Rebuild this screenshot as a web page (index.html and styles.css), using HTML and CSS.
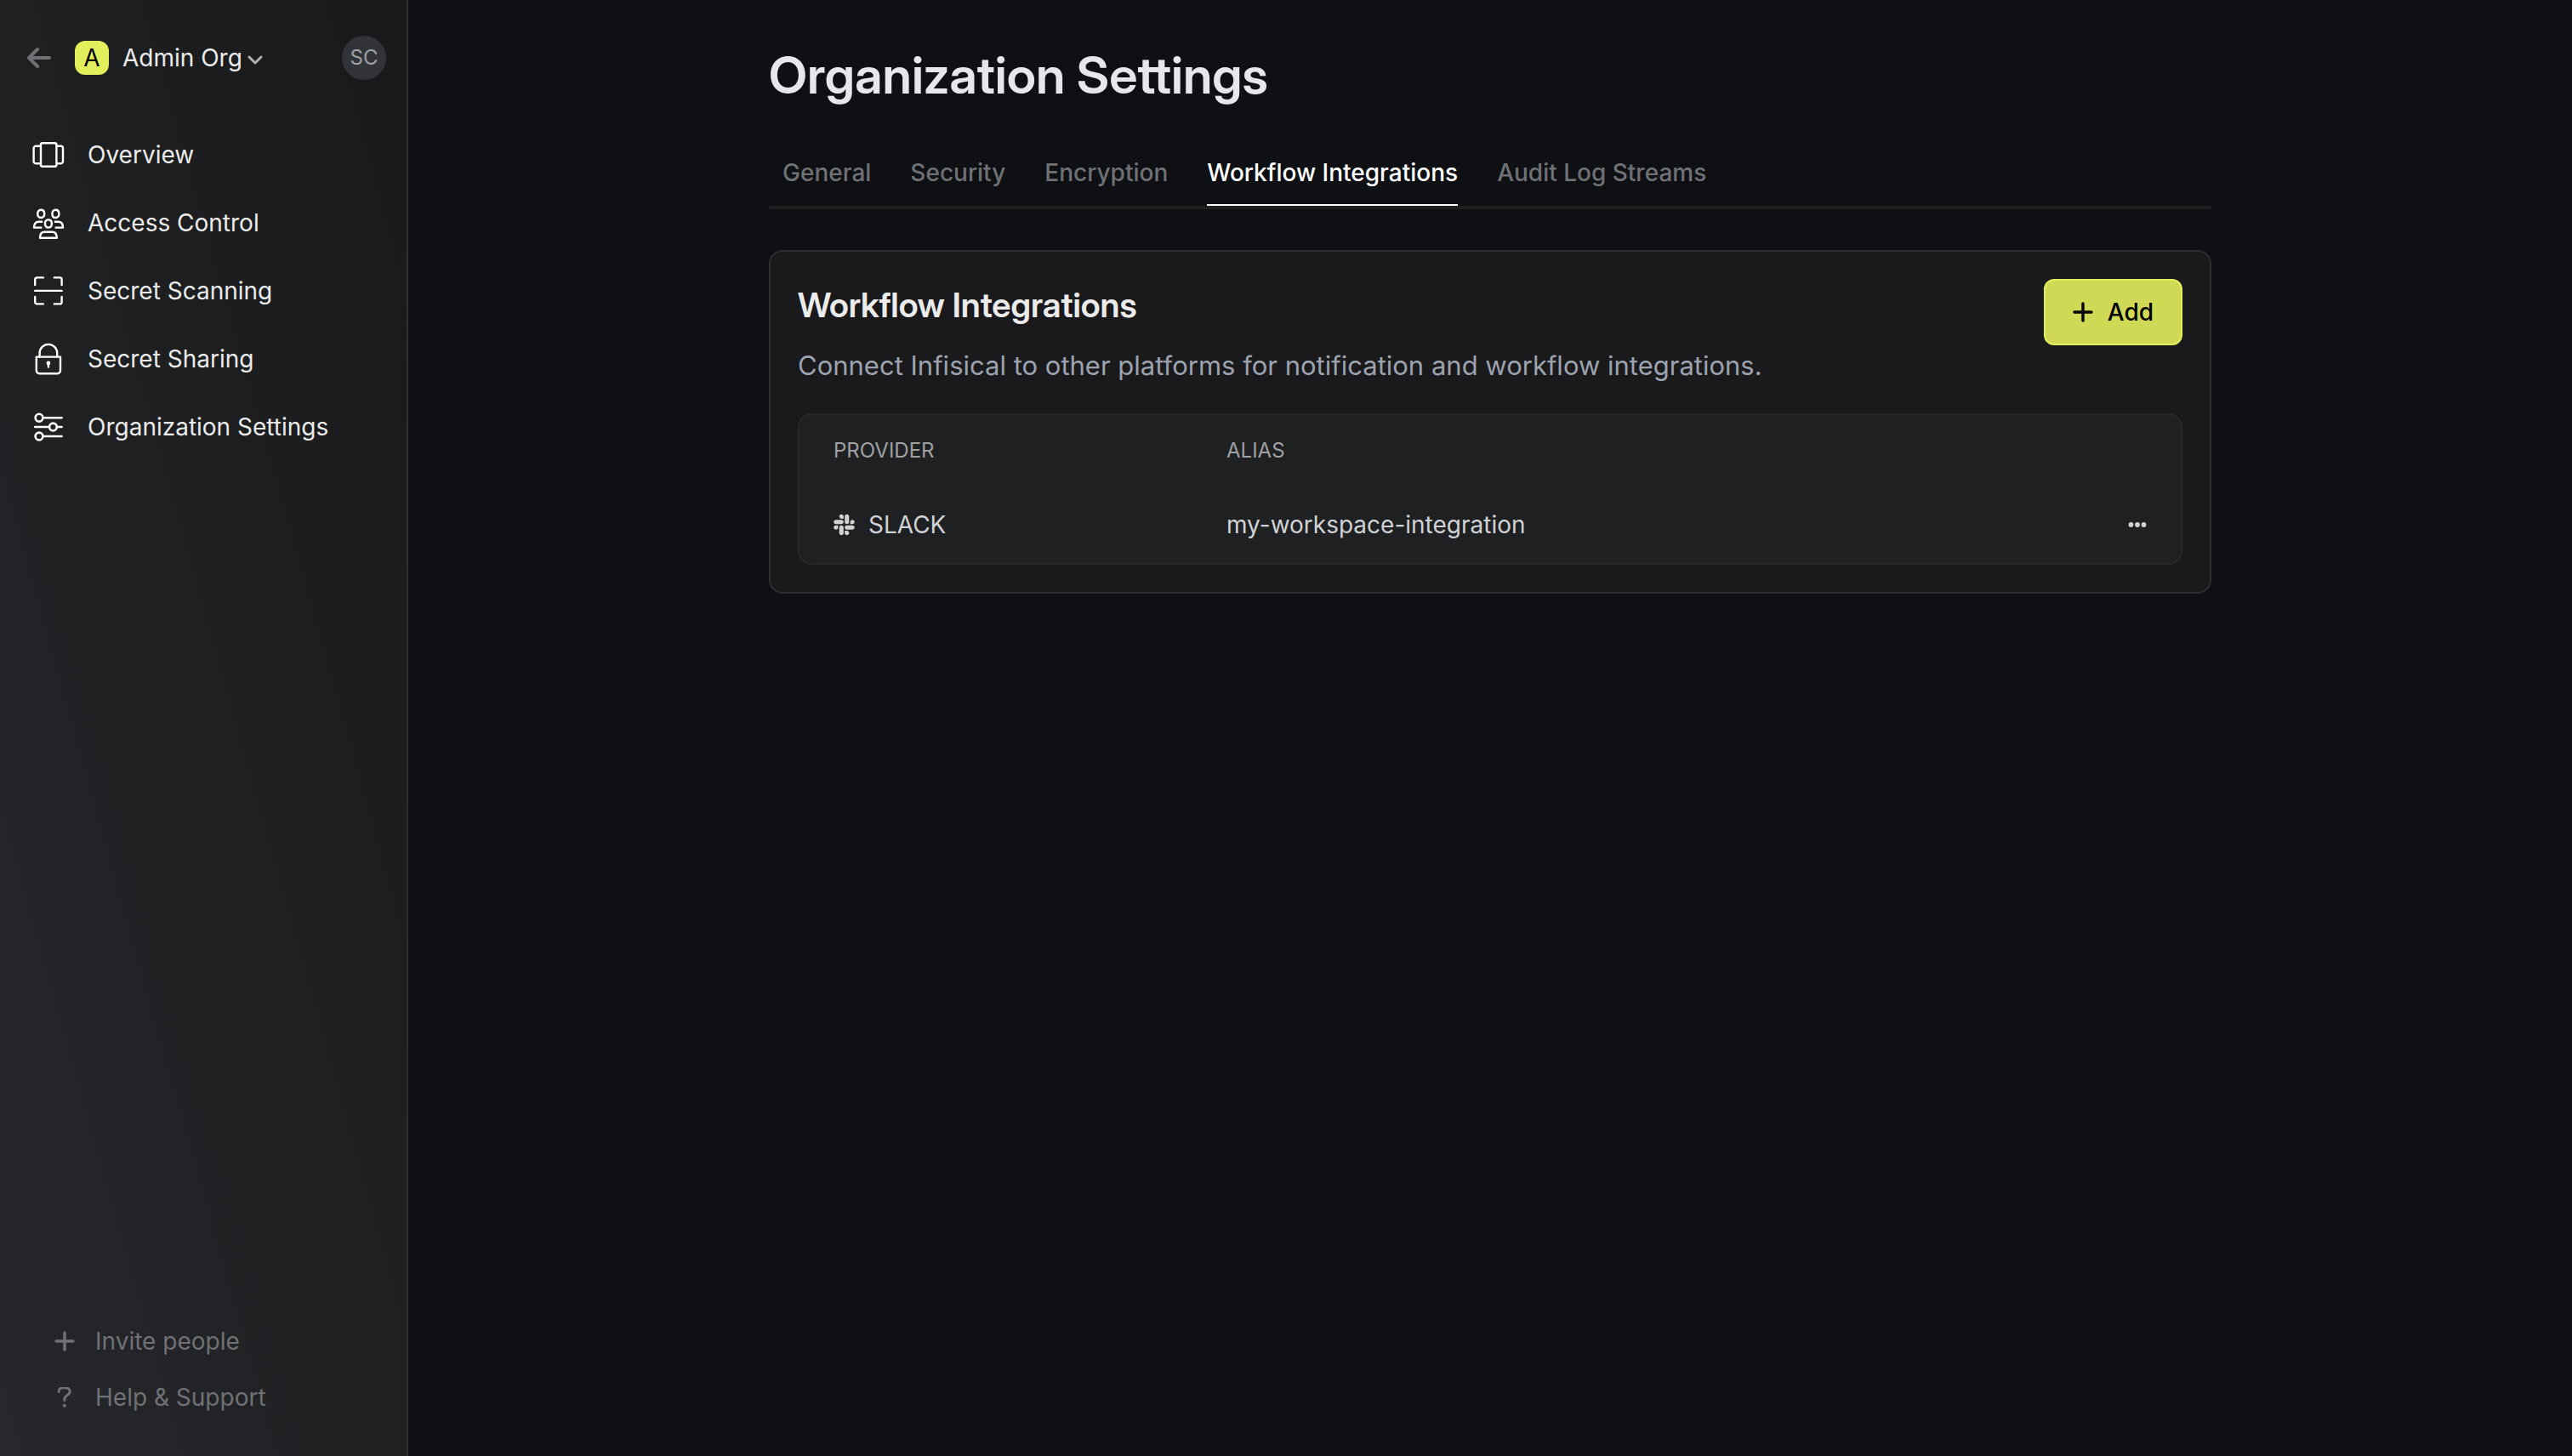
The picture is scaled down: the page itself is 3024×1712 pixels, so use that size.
FILE: index.html
```html
<!DOCTYPE html>
<html lang="en">
<head>
  <meta charset="utf-8">
  <title>Organization Settings</title>
  <link rel="stylesheet" href="styles.css">
</head>
<body>
  <div class="app">
    <aside class="sidebar">
      <header class="org-bar">
        <a class="back" href="#" aria-label="Back">
          <svg width="28" height="28" viewBox="0 0 28 28" fill="none" stroke="currentColor" stroke-width="4" stroke-linecap="round" stroke-linejoin="round"><path d="M26 14H3M12 4 2 14l10 10"/></svg>
        </a>
        <button class="org-switch" type="button">
          <span class="org-logo">A</span>
          <span class="org-name">Admin Org</span>
          <svg class="chevron" width="18" height="12" viewBox="0 0 18 12" fill="none" stroke="currentColor" stroke-width="3" stroke-linecap="round" stroke-linejoin="round"><path d="m2 2 7 7 7-7"/></svg>
        </button>
        <button class="avatar" type="button">SC</button>
      </header>

      <nav class="nav">
        <a class="nav-link" href="#">
          <svg width="40" height="40" viewBox="0 0 40 40" fill="none" stroke="currentColor" stroke-width="2.4" stroke-linejoin="round"><rect x="11" y="6.200" width="18.400" height="27.600" rx="2"/><path d="M11 30.200H5a2.400 2.400 0 0 1-2.400-2.400V12.200A2.400 2.400 0 0 1 5 9.800h6M29.400 30.200h5.200a2.400 2.400 0 0 0 2.400-2.400V12.200a2.400 2.400 0 0 0-2.400-2.400h-5.200"/></svg>
          Overview
        </a>
        <a class="nav-link" href="#">
          <svg width="40" height="40" viewBox="0 0 40 40" fill="none" stroke="currentColor" stroke-width="2.400" stroke-linejoin="round"><path d="M11.200 4.800c3 0 4 2.400 4 4.700s-1.200 4.500-4 4.500-4-2.200-4-4.500 1-4.700 4-4.700ZM28.400 4.800c3 0 4 2.400 4 4.700s-1.200 4.500-4 4.500-4-2.200-4-4.500 1-4.700 4-4.700ZM19.900 16.400c3 0 4 2.400 4 4.700s-1.200 4.500-4 4.500-4-2.200-4-4.500 1-4.700 4-4.700Z"/><path d="M13.200 18.800H8.400C4.600 18.800 3 21.800 3 25.600h9.400M26.800 18.800h4.800c3.800 0 5.400 3 5.400 6.800h-9.400M10 37.800c0-4.600 2-7 5.400-7h9c3.400 0 5.400 2.400 5.400 7Z"/></svg>
          Access Control
        </a>
        <a class="nav-link" href="#">
          <svg width="40" height="40" viewBox="0 0 40 40" fill="none" stroke="currentColor" stroke-width="2.400" stroke-linecap="round"><path d="M4.200 13V6.600a2.200 2.200 0 0 1 2.200-2.200h7.400M26.800 4.400h6.600a2.200 2.200 0 0 1 2.200 2.200V13M35.600 27v6.200a2.200 2.200 0 0 1-2.200 2.200h-6.600M13.800 35.400H6.400a2.200 2.200 0 0 1-2.200-2.200V27M4.200 19.900h31.400"/></svg>
          Secret Scanning
        </a>
        <a class="nav-link" href="#">
          <svg width="40" height="40" viewBox="0 0 40 40" fill="none" stroke="currentColor" stroke-width="2.400" stroke-linecap="round" stroke-linejoin="round"><path d="M9.600 17.600v-4.400a10.300 10.300 0 0 1 20.600 0v4.400"/><path d="M5.800 17.600h28.200v16.200a3.400 3.400 0 0 1-3.400 3.400H9.200a3.400 3.400 0 0 1-3.400-3.400Z"/><path d="M19.900 25v4.600"/><circle cx="19.900" cy="25" r="1.200" fill="currentColor"/></svg>
          Secret Sharing
        </a>
        <a class="nav-link" href="#">
          <svg width="40" height="40" viewBox="0 0 40 40" fill="none" stroke="currentColor" stroke-width="2.600" stroke-linecap="round"><circle cx="9" cy="9.200" r="4.400"/><circle cx="25.400" cy="20" r="4.400"/><circle cx="9" cy="31" r="4.400"/><path d="M13.600 9.200h22M4.200 20h16.800M30 20h5.600M13.600 31h22"/></svg>
          Organization Settings
        </a>
      </nav>

      <footer class="side-foot">
        <button class="foot-link" type="button">
          <svg width="24" height="24" viewBox="0 0 24 24" fill="none" stroke="currentColor" stroke-width="3.400" stroke-linecap="round"><path d="M12 2v20M2 12h20"/></svg>
          Invite people
        </button>
        <button class="foot-link" type="button">
          <svg width="24" height="24" viewBox="0 0 24 24" fill="none" stroke="currentColor" stroke-width="3" stroke-linecap="round" stroke-linejoin="round"><path d="M5.200 5.400V5a4.200 4.200 0 0 1 4.200-4.200h4a4.600 4.600 0 0 1 4.800 4.600c0 4-6.400 4.400-6.400 8.600v1.400"/><circle cx="11.800" cy="21.800" r="2" fill="currentColor" stroke="none"/></svg>
          Help &amp; Support
        </button>
      </footer>
    </aside>

    <main class="main">
      <div class="page">
        <h1 class="title">Organization Settings</h1>
        <div class="tabs" role="tablist">
          <button class="tab" role="tab" type="button">General</button>
          <button class="tab" role="tab" type="button">Security</button>
          <button class="tab" role="tab" type="button">Encryption</button>
          <button class="tab tab-active" role="tab" type="button" aria-selected="true">Workflow Integrations</button>
          <button class="tab" role="tab" type="button">Audit Log Streams</button>
        </div>

        <section class="card">
          <div class="card-head">
            <div>
              <h2 class="card-title">Workflow Integrations</h2>
              <p class="card-text">Connect Infisical to other platforms for notification and workflow integrations.</p>
            </div>
            <button class="add" type="button">
              <svg width="24" height="24" viewBox="0 0 24 24" fill="none" stroke="currentColor" stroke-width="3.400" stroke-linecap="round"><path d="M12 2v20M2 12h20"/></svg>
              Add
            </button>
          </div>

          <div class="table-box">
            <table class="table">
              <thead>
                <tr><th class="col-provider">Provider</th><th>Alias</th><th class="col-menu"></th></tr>
              </thead>
              <tbody>
                <tr>
                  <td>
                    <span class="provider">
                      <svg width="25" height="28" viewBox="0 0 448 512" fill="currentColor"><path d="M94.120 315.100c0 25.900-21.160 47.060-47.060 47.060S0 341 0 315.100c0-25.900 21.160-47.060 47.060-47.060h47.060v47.060zm23.720 0c0-25.900 21.160-47.060 47.060-47.060s47.060 21.160 47.060 47.060v117.840c0 25.900-21.160 47.060-47.060 47.060s-47.060-21.160-47.060-47.060V315.100zm47.060-188.980c-25.900 0-47.060-21.160-47.060-47.060S139 32 164.900 32s47.060 21.160 47.060 47.060v47.060H164.900zm0 23.720c25.900 0 47.060 21.160 47.060 47.060s-21.160 47.060-47.060 47.060H47.060C21.160 243.960 0 222.800 0 196.900s21.160-47.060 47.060-47.060H164.900zm188.980 47.060c0-25.900 21.160-47.060 47.060-47.060 25.900 0 47.060 21.160 47.060 47.060s-21.160 47.060-47.060 47.060h-47.060V196.900zm-23.720 0c0 25.900-21.160 47.060-47.060 47.060-25.900 0-47.060-21.160-47.060-47.060V79.060c0-25.900 21.160-47.060 47.060-47.060 25.900 0 47.060 21.160 47.060 47.060V196.900zM283.100 385.880c25.900 0 47.060 21.160 47.060 47.060 0 25.900-21.160 47.060-47.060 47.060-25.900 0-47.060-21.160-47.060-47.060v-47.060h47.060zm0-23.720c-25.900 0-47.060-21.160-47.060-47.060 0-25.900 21.160-47.060 47.060-47.060h117.840c25.900 0 47.060 21.160 47.060 47.060 0 25.900-21.160 47.060-47.060 47.060H283.100z"/></svg>
                      SLACK
                    </span>
                  </td>
                  <td>my-workspace-integration</td>
                  <td class="col-menu">
                    <button class="menu" type="button" aria-label="More options">
                      <svg width="22" height="8" viewBox="0 0 22 8" fill="currentColor"><circle cx="3.500" cy="4" r="2.900"/><circle cx="11" cy="4" r="2.900"/><circle cx="18.500" cy="4" r="2.900"/></svg>
                    </button>
                  </td>
                </tr>
              </tbody>
            </table>
          </div>
        </section>
      </div>
    </main>
  </div>
</body>
</html>
```
FILE: styles.css
```css
* {
  box-sizing: border-box;
}

body {
  margin: 0;
  background: #0e1014;
  color: #ebebeb;
  font-family: Inter, "Liberation Sans", sans-serif;
  font-size: 28px;
  line-height: 40px;
}

button {
  margin: 0;
  padding: 0;
  border: 0;
  background: none;
  color: inherit;
  font: inherit;
  cursor: pointer;
}

a {
  color: inherit;
  text-decoration: none;
}

svg {
  display: block;
  flex: none;
}

.app {
  display: flex;
  min-height: 100vh;
}

/* Sidebar */
.sidebar {
  display: flex;
  flex: none;
  flex-direction: column;
  width: 480px;
  border-right: 2px solid #2d2f33;
  background: linear-gradient(to top right, #27282c, #1f2022, #19191b);
}

.org-bar {
  display: flex;
  align-items: center;
  padding: 42px 24px 42px 32px;
}

.back {
  margin-right: 28px;
  color: #707174;
}

.org-switch {
  display: flex;
  flex: 1;
  align-items: center;
}

.org-logo {
  width: 40px;
  margin-right: 16px;
  border-radius: 12px;
  background: #e2ee5c;
  color: #000;
  text-align: center;
}

.chevron {
  margin: 6px 0 0 6px;
  color: #b0b1b3;
}

.avatar {
  width: 52px;
  height: 52px;
  border-radius: 50%;
  background: #323338;
  color: #9fa0a3;
  font-size: 24px;
}

.nav {
  display: flex;
  flex-direction: column;
  padding: 6px 36px;
}

.nav-link {
  display: flex;
  align-items: center;
  gap: 26px;
  height: 80px;
  padding-left: 1px;
}

.nav-link svg {
  color: #fff;
}

.side-foot {
  display: flex;
  flex-direction: column;
  gap: 26px;
  margin-top: auto;
  padding: 0 64px 49px;
  color: #707174;
}

.foot-link {
  display: flex;
  align-items: center;
  gap: 24px;
}

/* Page */
.main {
  flex: 1;
  padding: 52px 48px;
}

.page {
  max-width: 1696px;
  margin: 0 auto;
}

.title {
  margin: 0;
  color: #e5e7eb;
  font-family: "Inter Display", Inter, "Liberation Sans", sans-serif;
  font-size: 60px;
  font-weight: 600;
  line-height: 72px;
}

.tabs {
  display: flex;
  gap: 46px;
  margin-top: 42px;
  padding: 0 16px;
  border-bottom: 4px solid #1e1f21;
}

.tab {
  height: 76px;
  border-bottom: 2px solid transparent;
  color: #707174;
  font-weight: 500;
}

.tab-active {
  border-color: #fff;
  color: #fff;
}

.card {
  margin-top: 48px;
  padding: 32px;
  border: 2px solid #2d2f33;
  border-radius: 16px;
  background: #1a1a1c;
}

.card-head {
  display: flex;
  align-items: flex-start;
  justify-content: space-between;
}

.card-title {
  margin: 0;
  font-family: "Inter Display", Inter, "Liberation Sans", sans-serif;
  font-size: 40px;
  font-weight: 600;
  line-height: 62px;
}

.card-text {
  margin: 16px 0 32px;
  color: #9ca3af;
  font-size: 31px;
  line-height: 48px;
}

.add {
  display: flex;
  align-items: center;
  gap: 17px;
  height: 78px;
  padding: 0 32px;
  border: 2px solid #e2ee5c;
  border-radius: 12px;
  background: #cfd955;
  color: #000;
  font-weight: 500;
}

.table-box {
  border: 2px solid #272829;
  border-radius: 16px;
  background: #1f2022;
}

.table {
  width: 100%;
  border-collapse: collapse;
  color: #d1d2d6;
  text-align: left;
}

.table th {
  height: 84px;
  padding: 0 40px;
  color: #a0a1a3;
  font-size: 24px;
  font-weight: 400;
  text-transform: uppercase;
}

.table td {
  height: 90px;
  padding: 0 40px;
}

.table .col-provider {
  width: 462px;
}

.table .col-menu {
  width: 120px;
}

.provider {
  display: flex;
  align-items: center;
  gap: 16px;
}

.menu {
  display: block;
  margin-left: auto;
}
```
